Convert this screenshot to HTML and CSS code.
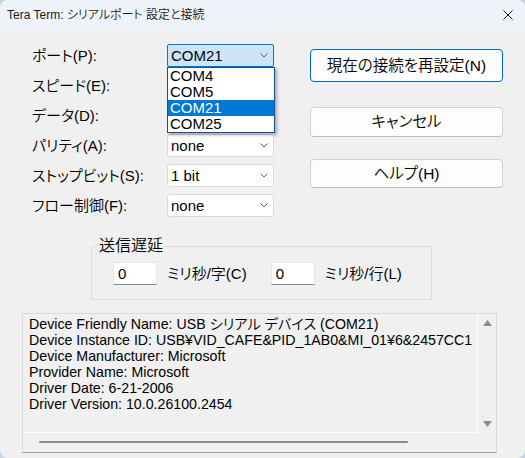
FILE: index.html
```html
<!DOCTYPE html>
<html lang="ja">
<head>
<meta charset="utf-8">
<title>Tera Term: シリアルポート 設定と接続</title>
<link rel="stylesheet" href="styles.css">
</head>
<body>
<div class="window">
  <div class="titlebar">
    <span class="title">Tera Term: シリアルポート 設定と接続</span>
    <svg class="close" width="10" height="10" viewBox="0 0 10 10"><path d="M0.5 0.5 L9.5 9.5 M9.5 0.5 L0.5 9.5" stroke="#1b1b1b" stroke-width="1" fill="none"/></svg>
  </div>
  <div class="content">
    <div class="top">
      <div class="form">
        <span class="lbl">ポート(P):</span>
        <div class="combo focus"><span class="val">COM21</span><svg class="chev" width="8" height="5" viewBox="0 0 8 5"><path d="M0.5 0.5 L4 4 L7.5 0.5" stroke="#5f5f5f" fill="none"/></svg></div>
        <span class="lbl">スピード(E):</span>
        <div class="combo"><span class="val"></span><svg class="chev" width="8" height="5" viewBox="0 0 8 5"><path d="M0.5 0.5 L4 4 L7.5 0.5" stroke="#5f5f5f" fill="none"/></svg></div>
        <span class="lbl">データ(D):</span>
        <div class="combo"><span class="val"></span><svg class="chev" width="8" height="5" viewBox="0 0 8 5"><path d="M0.5 0.5 L4 4 L7.5 0.5" stroke="#5f5f5f" fill="none"/></svg></div>
        <span class="lbl">パリティ(A):</span>
        <div class="combo"><span class="val">none</span><svg class="chev" width="8" height="5" viewBox="0 0 8 5"><path d="M0.5 0.5 L4 4 L7.5 0.5" stroke="#5f5f5f" fill="none"/></svg></div>
        <span class="lbl">ストップビット(S):</span>
        <div class="combo"><span class="val">1 bit</span><svg class="chev" width="8" height="5" viewBox="0 0 8 5"><path d="M0.5 0.5 L4 4 L7.5 0.5" stroke="#5f5f5f" fill="none"/></svg></div>
        <span class="lbl">フロー制御(F):</span>
        <div class="combo"><span class="val">none</span><svg class="chev" width="8" height="5" viewBox="0 0 8 5"><path d="M0.5 0.5 L4 4 L7.5 0.5" stroke="#5f5f5f" fill="none"/></svg></div>
      </div>
      <div class="buttons">
        <button class="btn btn-default">現在の接続を再設定(N)</button>
        <button class="btn btn-cancel">キャンセル</button>
        <button class="btn btn-help">ヘルプ(H)</button>
      </div>
    </div>

    <fieldset class="group">
      <legend>送信遅延</legend>
      <div class="delay-row">
        <div class="edit">0</div>
        <span class="unit">ミリ秒/字(C)</span>
        <div class="edit">0</div>
        <span class="unit">ミリ秒/行(L)</span>
      </div>
    </fieldset>

    <div class="info">
      <div class="info-text">Device Friendly Name: USB シリアル デバイス (COM21)
Device Instance ID: USB¥VID_CAFE&amp;PID_1AB0&amp;MI_01¥6&amp;2457CC1
Device Manufacturer: Microsoft
Provider Name: Microsoft
Driver Date: 6-21-2006
Driver Version: 10.0.26100.2454</div>
      <div class="vscroll">
        <svg width="9" height="6" viewBox="0 0 9 6"><polygon points="0,6 4.5,0 9,6" fill="#8c8c8c"/></svg>
        <svg width="9" height="6" viewBox="0 0 9 6"><polygon points="0,0 4.5,6 9,0" fill="#8c8c8c"/></svg>
      </div>
      <div class="hscroll"><div class="hthumb"></div></div>
      <div class="corner"></div>
    </div>

    <ul class="dropdown">
      <li>COM4</li>
      <li>COM5</li>
      <li class="sel">COM21</li>
      <li>COM25</li>
    </ul>
  </div>
</div>
</body>
</html>
```

FILE: styles.css
```css
html, body {
  margin: 0;
  padding: 0;
}
body {
  background: #c9d3e0;
  font-family: "Liberation Sans", "Noto Sans CJK JP", sans-serif;
  font-feature-settings: "palt";
  font-weight: 350;
  color: #000;
}
.window {
  width: 525px;
  height: 458px;
  background: #f0f0f0;
  border-radius: 8px;
  overflow: hidden;
}
.titlebar {
  height: 30px;
  background: #eef3f9;
  display: flex;
  align-items: center;
  padding-left: 7px;
  box-sizing: border-box;
}
.title {
  font-size: 12px;
  line-height: 16px;
  color: #1a1a1a;
}
.close {
  margin-left: auto;
  margin-right: 12px;
}
.content {
  position: relative;
  height: 428px;
}
.top {
  display: flex;
  padding: 14px 0 0 32px;
}
.form {
  display: grid;
  grid-template-columns: 135px 107px;
  grid-auto-rows: 23px;
  row-gap: 7px;
  align-items: center;
}
.lbl {
  font-size: 15px;
  line-height: 23px;
  white-space: nowrap;
}
.combo {
  height: 23px;
  box-sizing: border-box;
  border: 1px solid #d9d9d9;
  border-radius: 3px;
  background: #fff;
  display: flex;
  align-items: center;
  padding: 0 5px 0 3px;
  font-size: 15px;
  line-height: 21px;
}
.combo.focus {
  background: #cce4f7;
  border-color: #0078d4;
  border-radius: 2px;
}
.val {
  flex: 1;
}
.chev {
  display: block;
}
.buttons {
  display: flex;
  flex-direction: column;
  margin-left: 36px;
  width: 193px;
}
.btn {
  font-family: inherit;
  font-feature-settings: "palt";
  font-weight: 350;
  font-size: 15.5px;
  line-height: 20px;
  color: #000;
  background: #fdfdfd;
  border: 1px solid #d0d0d0;
  border-bottom-color: #bcbcbc;
  border-radius: 4px;
  padding: 0;
  box-sizing: border-box;
}
.btn-default {
  margin-top: 5px;
  height: 33px;
  border-color: #0067c0;
}
.btn-cancel {
  margin-top: 25px;
  height: 30px;
}
.btn-help {
  margin-top: 22px;
  height: 29px;
}
.group {
  margin: 20px 0 0 91px;
  width: 341px;
  box-sizing: border-box;
  border: 1px solid #dcdcdc;
  padding: 7px 0 14px 0;
  min-width: 0;
}
.group legend {
  font-size: 16px;
  line-height: 18px;
  padding: 0 2px;
  margin-left: 5px;
}
.delay-row {
  display: flex;
  align-items: center;
  padding-left: 21px;
}
.edit {
  width: 44px;
  height: 23px;
  box-sizing: border-box;
  background: #fff;
  border: 1px solid #e6e6e6;
  border-bottom-color: #8a8a8a;
  font-size: 15px;
  line-height: 21px;
  padding-left: 4px;
}
.unit {
  font-size: 15px;
  line-height: 23px;
  margin-left: 10px;
  margin-right: 24px;
  white-space: nowrap;
}
.info {
  margin: 13px 0 0 22px;
  width: 475px;
  height: 140px;
  box-sizing: border-box;
  border: 1px solid #dadada;
  border-bottom-color: #a0a0a0;
  display: grid;
  grid-template-columns: 1fr 18px;
  grid-template-rows: 1fr 19px;
}
.info-text {
  border-right: 1px solid #fff;
  border-bottom: 1px solid #fff;
  padding: 2px 0 0 6px;
  font-size: 14.2px;
  line-height: 16px;
  white-space: pre;
  overflow: hidden;
}
.vscroll {
  display: flex;
  flex-direction: column;
  justify-content: space-between;
  align-items: center;
  padding: 6px 0 6px 0;
}
.vscroll svg {
  display: block;
}
.hscroll {
  position: relative;
}
.hthumb {
  margin: 8px 0 0 16px;
  width: 369px;
  height: 2px;
  background: #8a8a8a;
  border-radius: 1px;
}
.dropdown {
  position: absolute;
  top: 37px;
  left: 167px;
  width: 108px;
  margin: 0;
  padding: 0;
  list-style: none;
  box-sizing: border-box;
  border: 1px solid #144f97;
  background: #fff;
  box-shadow: 2px 2px 3px rgba(0, 0, 0, 0.3);
}
.dropdown li {
  height: 16px;
  font-size: 15px;
  line-height: 16px;
  padding-left: 2px;
}
.dropdown li.sel {
  background: #0078d7;
  color: #fff;
}
```
